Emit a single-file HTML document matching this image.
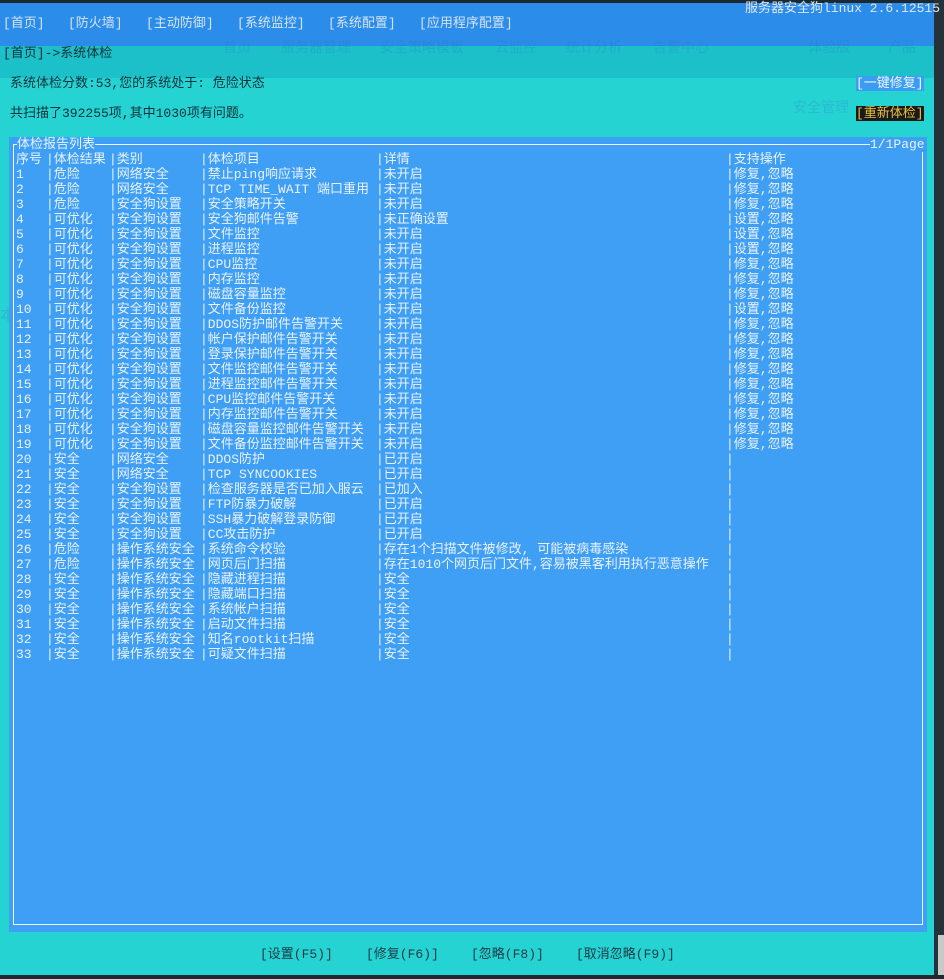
<!DOCTYPE html>
<html><head><meta charset="utf-8"><style>
*{margin:0;padding:0;box-sizing:border-box}
body{width:944px;height:979px;overflow:hidden;background:#26d3d3;position:relative;font-family:"Liberation Mono","Noto Sans CJK SC",monospace;font-size:13px;}
.a{position:absolute;white-space:pre;line-height:15px}
.r{position:absolute;left:0;height:15px;width:100%}
.r span{position:absolute;top:0;white-space:pre;line-height:15px;overflow:hidden;color:#eaf2ff}
.c0{left:16px;width:30px}.c1{left:46px;width:63px}.c2{left:109px;width:91px}.c3{left:200px;width:176px}.c4{left:376px;width:350px}.c5{left:726px;width:190px}
.g{position:absolute;color:rgba(40,120,200,0.25);font-family:"Liberation Sans","Noto Sans CJK SC",sans-serif;font-size:14px}
</style></head><body>
<div style="position:absolute;left:0;top:0;width:944px;height:3px;background:#1c2a30"></div>
<div style="position:absolute;left:0;top:3px;width:934px;height:43px;background:#2b8ce9"></div>
<div style="position:absolute;left:0;top:46px;width:934px;height:32px;background:#1cc0c8"></div>
<div style="position:absolute;left:934px;top:0;width:10px;height:979px;background:#25323a"></div>
<div style="position:absolute;left:938px;top:935px;width:6px;height:40px;background:#c8c8c8"></div>
<div style="position:absolute;left:0;top:975px;width:944px;height:4px;background:#1c2a30"></div>
<div class="g" style="left:223px;top:37px">首页</div>
<div class="g" style="left:281px;top:37px">服务器管理</div>
<div class="g" style="left:380px;top:37px">安全策略模板</div>
<div class="g" style="left:495px;top:37px">云监控</div>
<div class="g" style="left:566px;top:37px">统计分析</div>
<div class="g" style="left:653px;top:37px">告警中心</div>
<div class="g" style="left:808px;top:37px">体验版</div>
<div class="g" style="left:888px;top:37px">产品</div>
<div class="g" style="left:793px;top:97px">安全管理</div>
<div class="g" style="left:0px;top:301px;font-size:16px">本体检信息，建议您再到面登录服务器进行体检</div>
<div class="a" style="left:745px;top:1px;color:#dde8f5">服务器安全狗linux 2.6.12515</div>
<div class="a" style="left:3px;top:16px;color:#d5e4f6">[首页]   [防火墙]   [主动防御]   [系统监控]   [系统配置]   [应用程序配置]</div>
<div class="a" style="left:3px;top:46px;color:#10303a">[首页]->系统体检</div>
<div class="a" style="left:10px;top:76px;color:#10303a">系统体检分数:53,您的系统处于: 危险状态</div>
<div class="a" style="left:10px;top:106px;color:#10303a">共扫描了392255项,其中1030项有问题。</div>
<div class="a" style="left:856px;top:76px;background:#3b9cf3;color:#f0f6ff">[一键修复]</div>
<div class="a" style="left:856px;top:106px;background:#1a1a1a;color:#e8c040">[重新体检]</div>
<div style="position:absolute;left:9px;top:137px;width:918px;height:795px;background:#3e9ff5"></div>
<div style="position:absolute;left:13px;top:144px;width:910px;height:781px;border:1px solid #f0f6ff"></div>
<div class="a" style="left:17px;top:137px;background:#3e9ff5;color:#eaf2ff">体检报告列表</div>
<div class="a" style="left:870px;top:137px;background:#3e9ff5;color:#eaf2ff">1/1Page</div>
<div class="r" style="top:152px"><span class="c0">序号</span><span class="c1">|体检结果</span><span class="c2">|类别</span><span class="c3">|体检项目</span><span class="c4">|详情</span><span class="c5">|支持操作</span></div>
<div class="r" style="top:167px"><span class="c0">1</span><span class="c1">|危险</span><span class="c2">|网络安全</span><span class="c3">|禁止ping响应请求</span><span class="c4">|未开启</span><span class="c5">|修复,忽略</span></div>
<div class="r" style="top:182px"><span class="c0">2</span><span class="c1">|危险</span><span class="c2">|网络安全</span><span class="c3">|TCP TIME_WAIT 端口重用</span><span class="c4">|未开启</span><span class="c5">|修复,忽略</span></div>
<div class="r" style="top:197px"><span class="c0">3</span><span class="c1">|危险</span><span class="c2">|安全狗设置</span><span class="c3">|安全策略开关</span><span class="c4">|未开启</span><span class="c5">|修复,忽略</span></div>
<div class="r" style="top:212px"><span class="c0">4</span><span class="c1">|可优化</span><span class="c2">|安全狗设置</span><span class="c3">|安全狗邮件告警</span><span class="c4">|未正确设置</span><span class="c5">|设置,忽略</span></div>
<div class="r" style="top:227px"><span class="c0">5</span><span class="c1">|可优化</span><span class="c2">|安全狗设置</span><span class="c3">|文件监控</span><span class="c4">|未开启</span><span class="c5">|设置,忽略</span></div>
<div class="r" style="top:242px"><span class="c0">6</span><span class="c1">|可优化</span><span class="c2">|安全狗设置</span><span class="c3">|进程监控</span><span class="c4">|未开启</span><span class="c5">|设置,忽略</span></div>
<div class="r" style="top:257px"><span class="c0">7</span><span class="c1">|可优化</span><span class="c2">|安全狗设置</span><span class="c3">|CPU监控</span><span class="c4">|未开启</span><span class="c5">|修复,忽略</span></div>
<div class="r" style="top:272px"><span class="c0">8</span><span class="c1">|可优化</span><span class="c2">|安全狗设置</span><span class="c3">|内存监控</span><span class="c4">|未开启</span><span class="c5">|修复,忽略</span></div>
<div class="r" style="top:287px"><span class="c0">9</span><span class="c1">|可优化</span><span class="c2">|安全狗设置</span><span class="c3">|磁盘容量监控</span><span class="c4">|未开启</span><span class="c5">|修复,忽略</span></div>
<div class="r" style="top:302px"><span class="c0">10</span><span class="c1">|可优化</span><span class="c2">|安全狗设置</span><span class="c3">|文件备份监控</span><span class="c4">|未开启</span><span class="c5">|设置,忽略</span></div>
<div class="r" style="top:317px"><span class="c0">11</span><span class="c1">|可优化</span><span class="c2">|安全狗设置</span><span class="c3">|DDOS防护邮件告警开关</span><span class="c4">|未开启</span><span class="c5">|修复,忽略</span></div>
<div class="r" style="top:332px"><span class="c0">12</span><span class="c1">|可优化</span><span class="c2">|安全狗设置</span><span class="c3">|帐户保护邮件告警开关</span><span class="c4">|未开启</span><span class="c5">|修复,忽略</span></div>
<div class="r" style="top:347px"><span class="c0">13</span><span class="c1">|可优化</span><span class="c2">|安全狗设置</span><span class="c3">|登录保护邮件告警开关</span><span class="c4">|未开启</span><span class="c5">|修复,忽略</span></div>
<div class="r" style="top:362px"><span class="c0">14</span><span class="c1">|可优化</span><span class="c2">|安全狗设置</span><span class="c3">|文件监控邮件告警开关</span><span class="c4">|未开启</span><span class="c5">|修复,忽略</span></div>
<div class="r" style="top:377px"><span class="c0">15</span><span class="c1">|可优化</span><span class="c2">|安全狗设置</span><span class="c3">|进程监控邮件告警开关</span><span class="c4">|未开启</span><span class="c5">|修复,忽略</span></div>
<div class="r" style="top:392px"><span class="c0">16</span><span class="c1">|可优化</span><span class="c2">|安全狗设置</span><span class="c3">|CPU监控邮件告警开关</span><span class="c4">|未开启</span><span class="c5">|修复,忽略</span></div>
<div class="r" style="top:407px"><span class="c0">17</span><span class="c1">|可优化</span><span class="c2">|安全狗设置</span><span class="c3">|内存监控邮件告警开关</span><span class="c4">|未开启</span><span class="c5">|修复,忽略</span></div>
<div class="r" style="top:422px"><span class="c0">18</span><span class="c1">|可优化</span><span class="c2">|安全狗设置</span><span class="c3">|磁盘容量监控邮件告警开关</span><span class="c4">|未开启</span><span class="c5">|修复,忽略</span></div>
<div class="r" style="top:437px"><span class="c0">19</span><span class="c1">|可优化</span><span class="c2">|安全狗设置</span><span class="c3">|文件备份监控邮件告警开关</span><span class="c4">|未开启</span><span class="c5">|修复,忽略</span></div>
<div class="r" style="top:452px"><span class="c0">20</span><span class="c1">|安全</span><span class="c2">|网络安全</span><span class="c3">|DDOS防护</span><span class="c4">|已开启</span><span class="c5">|</span></div>
<div class="r" style="top:467px"><span class="c0">21</span><span class="c1">|安全</span><span class="c2">|网络安全</span><span class="c3">|TCP SYNCOOKIES</span><span class="c4">|已开启</span><span class="c5">|</span></div>
<div class="r" style="top:482px"><span class="c0">22</span><span class="c1">|安全</span><span class="c2">|安全狗设置</span><span class="c3">|检查服务器是否已加入服云</span><span class="c4">|已加入</span><span class="c5">|</span></div>
<div class="r" style="top:497px"><span class="c0">23</span><span class="c1">|安全</span><span class="c2">|安全狗设置</span><span class="c3">|FTP防暴力破解</span><span class="c4">|已开启</span><span class="c5">|</span></div>
<div class="r" style="top:512px"><span class="c0">24</span><span class="c1">|安全</span><span class="c2">|安全狗设置</span><span class="c3">|SSH暴力破解登录防御</span><span class="c4">|已开启</span><span class="c5">|</span></div>
<div class="r" style="top:527px"><span class="c0">25</span><span class="c1">|安全</span><span class="c2">|安全狗设置</span><span class="c3">|CC攻击防护</span><span class="c4">|已开启</span><span class="c5">|</span></div>
<div class="r" style="top:542px"><span class="c0">26</span><span class="c1">|危险</span><span class="c2">|操作系统安全</span><span class="c3">|系统命令校验</span><span class="c4">|存在1个扫描文件被修改, 可能被病毒感染</span><span class="c5">|</span></div>
<div class="r" style="top:557px"><span class="c0">27</span><span class="c1">|危险</span><span class="c2">|操作系统安全</span><span class="c3">|网页后门扫描</span><span class="c4">|存在1010个网页后门文件,容易被黑客利用执行恶意操作</span><span class="c5">|</span></div>
<div class="r" style="top:572px"><span class="c0">28</span><span class="c1">|安全</span><span class="c2">|操作系统安全</span><span class="c3">|隐藏进程扫描</span><span class="c4">|安全</span><span class="c5">|</span></div>
<div class="r" style="top:587px"><span class="c0">29</span><span class="c1">|安全</span><span class="c2">|操作系统安全</span><span class="c3">|隐藏端口扫描</span><span class="c4">|安全</span><span class="c5">|</span></div>
<div class="r" style="top:602px"><span class="c0">30</span><span class="c1">|安全</span><span class="c2">|操作系统安全</span><span class="c3">|系统帐户扫描</span><span class="c4">|安全</span><span class="c5">|</span></div>
<div class="r" style="top:617px"><span class="c0">31</span><span class="c1">|安全</span><span class="c2">|操作系统安全</span><span class="c3">|启动文件扫描</span><span class="c4">|安全</span><span class="c5">|</span></div>
<div class="r" style="top:632px"><span class="c0">32</span><span class="c1">|安全</span><span class="c2">|操作系统安全</span><span class="c3">|知名rootkit扫描</span><span class="c4">|安全</span><span class="c5">|</span></div>
<div class="r" style="top:647px"><span class="c0">33</span><span class="c1">|安全</span><span class="c2">|操作系统安全</span><span class="c3">|可疑文件扫描</span><span class="c4">|安全</span><span class="c5">|</span></div>
<div class="a" style="left:260px;top:947px;color:#1a3a44">[设置(F5)]</div>
<div class="a" style="left:366px;top:947px;color:#1a3a44">[修复(F6)]</div>
<div class="a" style="left:471px;top:947px;color:#1a3a44">[忽略(F8)]</div>
<div class="a" style="left:576px;top:947px;color:#1a3a44">[取消忽略(F9)]</div>
</body></html>
